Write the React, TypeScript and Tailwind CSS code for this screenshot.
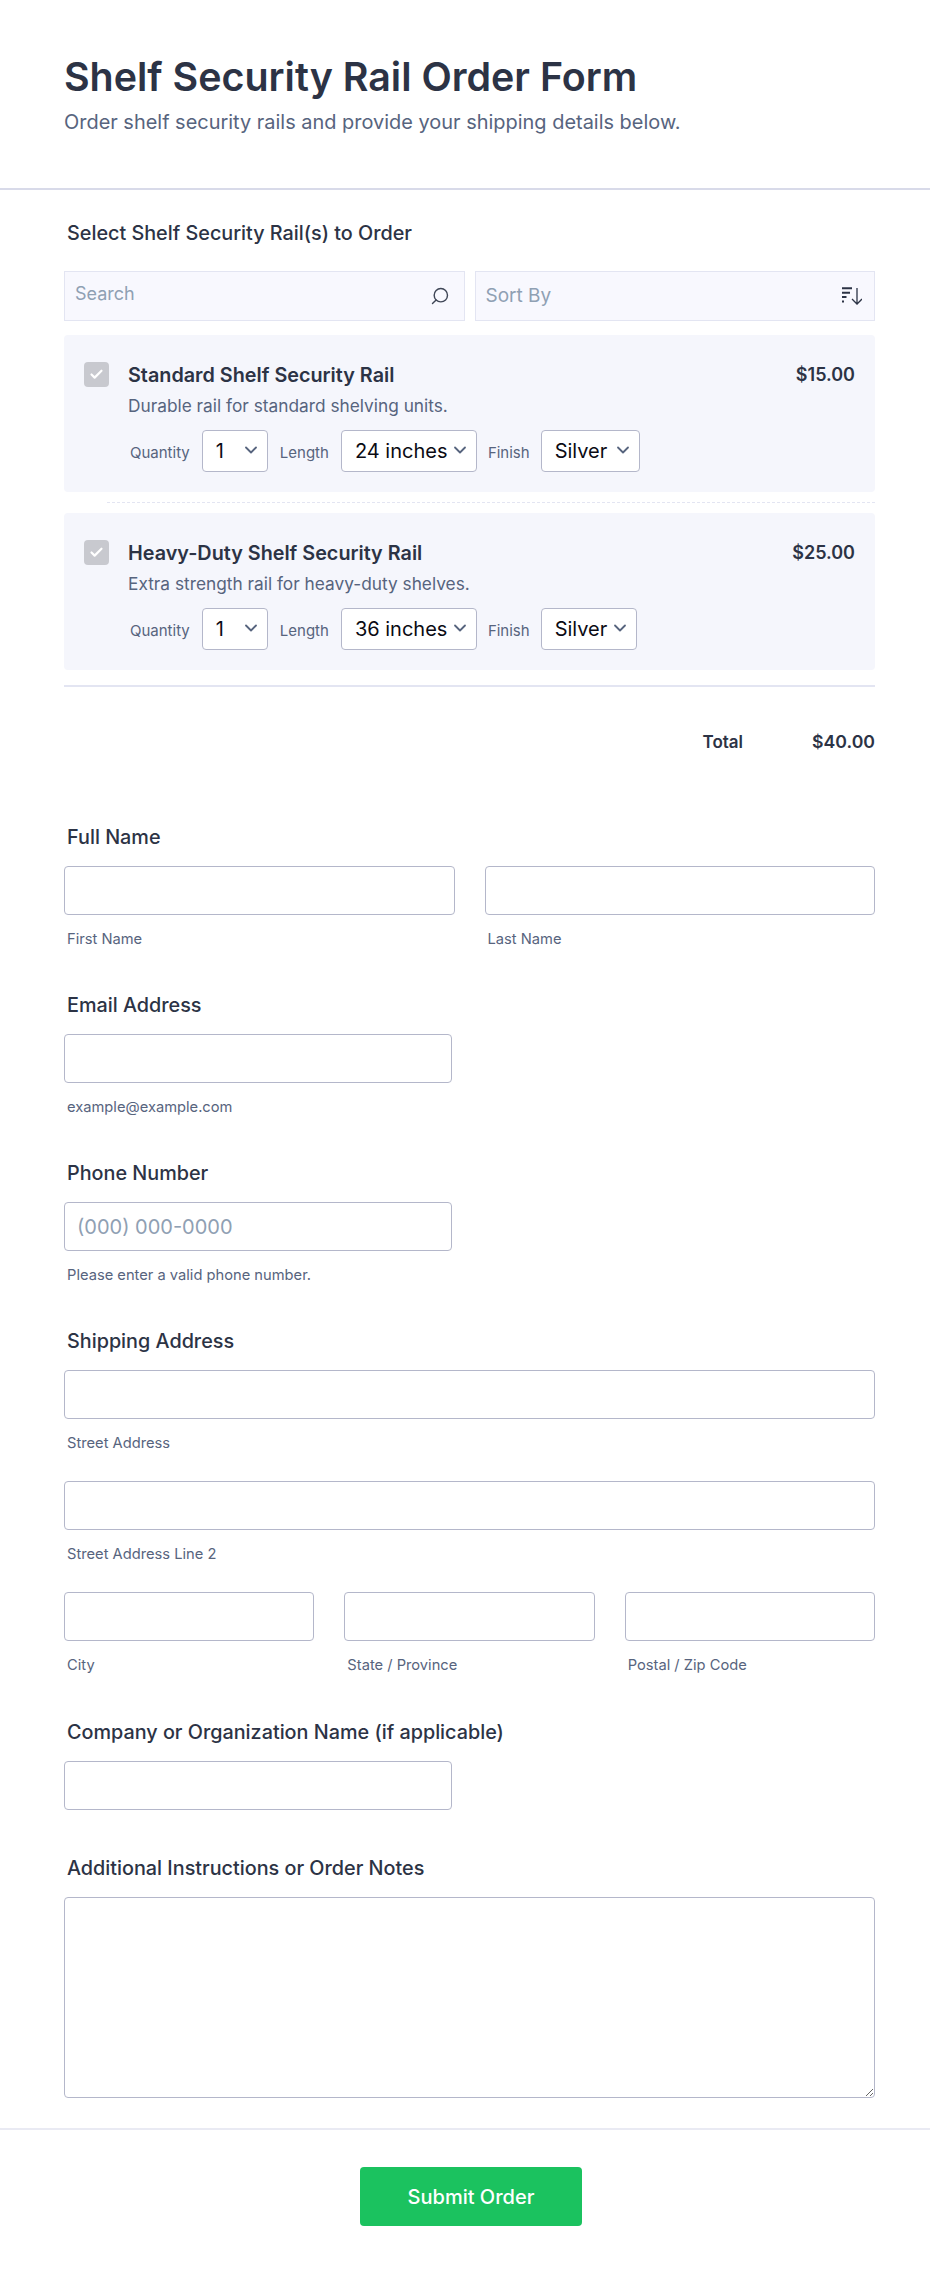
import React from 'react';
import { Check, ChevronDown, Search } from 'lucide-react';

const inputClass = 'block h-[49px] w-full rounded border border-[#b4b7ca] bg-white px-3 text-xl outline-none placeholder:text-[#8fa0b3]';

function SortIcon() {
  return <svg width="20" height="18" viewBox="0 0 20 18" fill="none" stroke="#2c3345">
      <path d="M0 1.200H10M0 5.700H8M0 10H4.500M0 14.500H2" strokeWidth="2" />
      <path d="M15 1V17M10 12L15 17L20 12" strokeWidth="1.300" />
    </svg>;
}

function Field({ label, className = '', children }: { label: string; className?: string; children: React.ReactNode }) {
  return <div className={className}>
      <div className="mb-[17px] pl-[3px] text-[19.800px] leading-6 font-medium text-[#2c3345]">{label}</div>
      {children}
    </div>;
}

function Sub({ children }: { children: React.ReactNode }) {
  return <div className="mt-3.5 pl-[3px] text-[14.700px] leading-5 text-[#57647e]">{children}</div>;
}

function MiniSelect({ value, width }: { value: string; width: string }) {
  return <div className={`flex h-[42px] items-center justify-between rounded border border-[#b4b7ca] bg-white pr-1.5 pl-[13px] text-xl text-[#0b0b14] ${width}`}>
      <span>{value}</span>
      <ChevronDown size={20} strokeWidth={2.200} className="mb-0.5 text-[#57647e]" />
    </div>;
}

function Product({ title, desc, price, length, finishWidth }: { title: string; desc: string; price: string; length: string; finishWidth: string }) {
  return <div className="flex h-[157px] rounded bg-[#f5f6fc] pt-[27px] pr-5 pl-5">
      <div className="mr-[19px] flex size-[25px] shrink-0 items-center justify-center rounded-sm bg-[#c8c9cf]">
        <Check size={15} strokeWidth={3.500} className="text-white" />
      </div>
      <div className="flex-1 pt-px">
        <div className="flex items-center justify-between">
          <div className="text-[19.800px] leading-6 font-semibold text-[#2c3345]">{title}</div>
          <div className="text-lg leading-6 font-semibold text-[#2c3345]">{price}</div>
        </div>
        <div className="mt-[7px] text-[17.300px] leading-6 text-[#57647e]">{desc}</div>
        <div className="mt-3 flex items-center pl-0.5 text-[15px] text-[#57647e]">
          <span className="mt-1 mr-3">Quantity</span>
          <MiniSelect value="1" width="w-[66px]" />
          <span className="mt-1 mr-3 ml-3">Length</span>
          <MiniSelect value={length} width="w-[136px]" />
          <span className="mt-1 mr-[11px] ml-[11px]">Finish</span>
          <MiniSelect value="Silver" width={finishWidth} />
        </div>
      </div>
    </div>;
}

export default function App() {
  return <div className="min-h-[2276px] bg-white font-['Inter',sans-serif]">
      <header className="h-[190px] border-b-2 border-[#d8dae9] px-16 pt-[50px]">
        <h1 className="text-[39.400px] leading-[54px] font-semibold text-[#2c3345]">Shelf Security Rail Order Form</h1>
        <p className="mt-1 text-[19.950px] leading-7 text-[#57647e]">Order shelf security rails and provide your shipping details below.</p>
      </header>

      <main className="pr-[55px] pl-16">
        <div className="pt-[29px] pl-[3px] text-[19.800px] leading-7 font-medium text-[#2c3345]">Select Shelf Security Rail(s) to Order</div>
        <div className="mt-6 grid grid-cols-2 gap-2.5">
          <div className="flex h-[50px] items-center justify-between border border-[#e3e5f2] bg-[#f8f8fe] pr-3.5 pl-2.5">
            <span className="mb-1 text-lg text-[#8fa0b3]">Search</span>
            <Search size={20} strokeWidth={1.700} className="-scale-x-100 text-[#3f4656]" />
          </div>
          <div className="flex h-[50px] items-center justify-between border border-[#e3e5f2] bg-[#f8f8fe] pr-3 pl-2.5">
            <span className="text-[19px] text-[#8fa0b3]">Sort By</span>
            <SortIcon />
          </div>
        </div>

        <div className="mt-3.5">
          <Product title="Standard Shelf Security Rail" desc="Durable rail for standard shelving units." price="$15.00" length="24 inches" finishWidth="w-[99px]" />
          <div className="my-2.5 ml-[43px] border-t border-dashed border-[#e3e5f2]" />
          <Product title="Heavy-Duty Shelf Security Rail" desc="Extra strength rail for heavy-duty shelves." price="$25.00" length="36 inches" finishWidth="w-[96px]" />
        </div>

        <div className="mt-[15px] border-t-2 border-[#e3e5f2] pt-[43px]">
          <div className="flex justify-end text-[17.700px] leading-6 font-semibold text-[#2c3345]">
            <span className="mr-[69px] text-[17px]">Total</span>
            <span>$40.00</span>
          </div>
        </div>

        <Field label="Full Name" className="mt-[71px]">
          <div className="grid grid-cols-2 gap-[30px]">
            <div><input className={inputClass} /><Sub>First Name</Sub></div>
            <div><input className={inputClass} /><Sub>Last Name</Sub></div>
          </div>
        </Field>

        <Field label="Email Address" className="mt-11">
          <input className={`${inputClass} max-w-[388px]`} />
          <Sub>example@example.com</Sub>
        </Field>

        <Field label="Phone Number" className="mt-11">
          <input className={`${inputClass} max-w-[388px]`} placeholder="(000) 000-0000" />
          <Sub>Please enter a valid phone number.</Sub>
        </Field>

        <Field label="Shipping Address" className="mt-11">
          <input className={inputClass} />
          <Sub>Street Address</Sub>
          <input className={`${inputClass} mt-7`} />
          <Sub>Street Address Line 2</Sub>
          <div className="mt-7 grid grid-cols-3 gap-[30px]">
            <div><input className={inputClass} /><Sub>City</Sub></div>
            <div><input className={inputClass} /><Sub>State / Province</Sub></div>
            <div><input className={inputClass} /><Sub>Postal / Zip Code</Sub></div>
          </div>
        </Field>

        <Field label="Company or Organization Name (if applicable)" className="mt-[45px]">
          <input className={`${inputClass} max-w-[388px]`} />
        </Field>

        <Field label="Additional Instructions or Order Notes" className="mt-[46px]">
          <textarea className="block h-[201px] w-full rounded border border-[#b4b7ca] bg-white px-3 outline-none" />
        </Field>
      </main>

      <footer className="mt-[30px] flex justify-center border-t-2 border-[#e9eaf3] pt-[37px] pl-3">
        <button className="h-[59px] w-[222px] rounded bg-[#1bc25f] text-xl font-medium text-white">Submit Order</button>
      </footer>
    </div>;
}
